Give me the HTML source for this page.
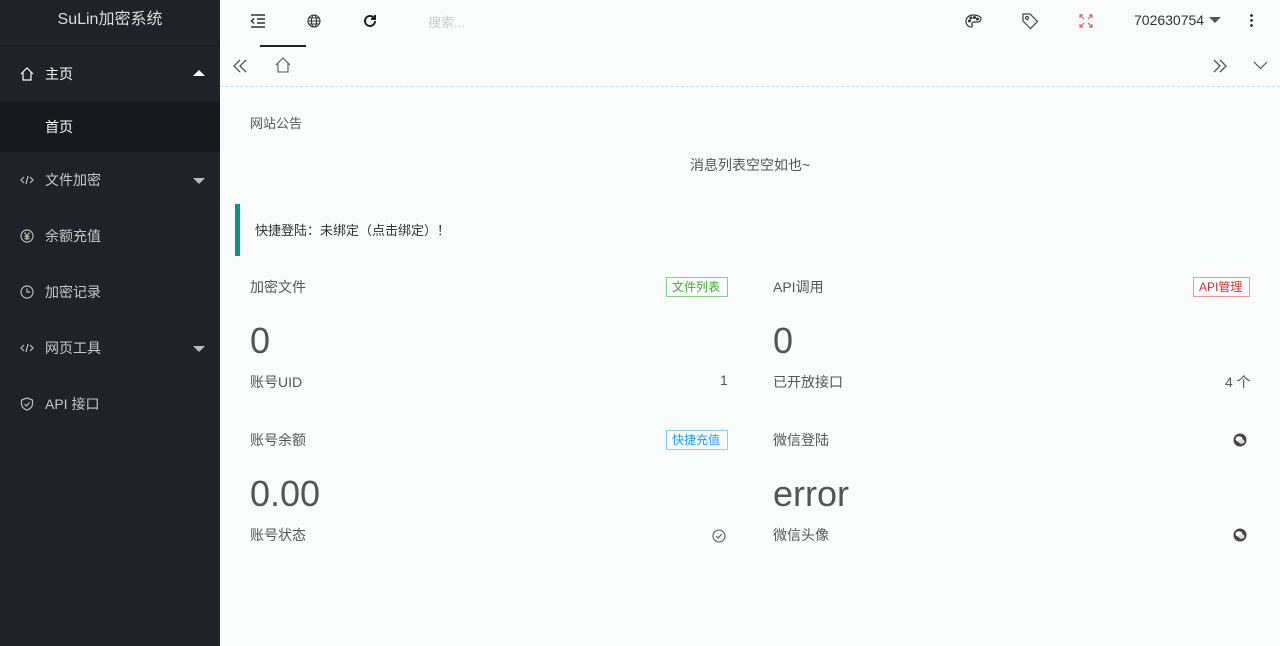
<!DOCTYPE html>
<html><head><meta charset="utf-8"><style>
*{margin:0;padding:0;box-sizing:border-box}
body{width:1280px;height:646px;overflow:hidden;background:#fafbfb;font-family:"Liberation Sans","Noto Sans CJK SC",sans-serif;font-size:14px;color:#333;position:relative}
.side{position:absolute;left:0;top:0;width:220px;height:646px;background:#20222a;color:rgba(255,255,255,.75)}
.logo{height:46px;line-height:40px;text-align:center;font-size:16px;color:#ddd;border-bottom:1px solid #1b1c22}
.it{height:56px;display:flex;align-items:center;padding-left:20px;position:relative;font-size:14px}
.it svg{width:14px;height:14px;margin-right:11px}
.sub{height:50px;line-height:50px;padding-left:45px;background:#18191e;color:#fff}
.arr{position:absolute;right:15px;top:26px;width:0;height:0;border-left:6px solid transparent;border-right:6px solid transparent;border-top:6px solid #bbb}
.up{border-top:none;border-bottom:6px solid #fff;top:24px}
.abs{position:absolute}
.lbl{font-size:14px;color:#555}
.big{font-size:36px;color:#555}
.tag{position:absolute;font-size:12px;height:20px;line-height:18px;padding:0 5px;border:1px solid}
</style></head><body>
<div class="side">
<div class="logo">SuLin加密系统</div>
<div class="it" style="color:#fff"><svg viewBox="0 0 14 14" fill="none" stroke="#fff" stroke-width="1.2"><path d="M1 7L7 1l6 6M3 5.5V13h8V5.5"/></svg>主页<span class="arr up"></span></div>
<div class="sub">首页</div>
<div class="it"><svg viewBox="0 0 14 14" fill="none" stroke="#bbb" stroke-width="1.2"><path d="M4 4L1 7l3 3M10 4l3 3-3 3M8 3L6 11"/></svg>文件加密<span class="arr"></span></div>
<div class="it"><svg viewBox="0 0 14 14" fill="none" stroke="#bbb" stroke-width="1.2"><circle cx="7" cy="7" r="6"/><path d="M4.5 3.5L7 7l2.5-3.5M7 7v4M4.5 7.5h5M4.5 9.5h5"/></svg>余额充值</div>
<div class="it"><svg viewBox="0 0 14 14" fill="none" stroke="#bbb" stroke-width="1.2"><circle cx="7" cy="7" r="6"/><path d="M7 3.5V7h3"/></svg>加密记录</div>
<div class="it"><svg viewBox="0 0 14 14" fill="none" stroke="#bbb" stroke-width="1.2"><path d="M4 4L1 7l3 3M10 4l3 3-3 3M8 3L6 11"/></svg>网页工具<span class="arr"></span></div>
<div class="it"><svg viewBox="0 0 14 14" fill="none" stroke="#bbb" stroke-width="1.2"><path d="M7 1l5.5 2v4c0 3-2.5 5-5.5 6C4 12 1.5 10 1.5 7V3z"/><path d="M4.5 7l2 2 3-3.5"/></svg>API 接口</div>
</div>

<svg class="abs" style="left:250px;top:13px" width="16" height="16" viewBox="0 0 16 16" fill="none" stroke="#333" stroke-width="1.5"><path d="M1 2h14M7 6h8M7 10h8M1 14h14M4 5.5L1.5 8 4 10.5"/></svg>
<div class="abs" style="left:260px;top:45px;width:46px;height:2px;background:#222"></div>
<svg class="abs" style="left:307px;top:14px" width="14" height="14" viewBox="0 0 14 14" fill="none" stroke="#333" stroke-width="1.1"><circle cx="7" cy="7" r="6"/><ellipse cx="7" cy="7" rx="2.6" ry="6"/><path d="M1 7h12M2 4h10M2 10h10"/></svg>
<svg class="abs" style="left:362px;top:13px" width="16" height="16" viewBox="0 0 16 16" fill="none" stroke="#222" stroke-width="2"><path d="M13 8a5 5 0 1 1-1.5-3.6"/><path d="M13 2v4H9" fill="#222"/></svg>
<div class="abs" style="left:428px;top:12px;color:#ccc;font-size:13px">搜索...</div>
<svg class="abs" style="left:965px;top:13px" width="17" height="16" viewBox="0 0 17 16" fill="none" stroke="#333" stroke-width="1.2"><path d="M8 2C4 2 1 5 1 8.5S4 14 6 14c1.5 0 1.5-1.5 1-2.5S7.5 9 9 9h3c2.5 0 4-1.5 4-3.5C16 3.5 12.5 2 8 2z"/><circle cx="4.5" cy="8" r=".9" fill="#333"/><circle cx="6" cy="5" r=".9" fill="#333"/><circle cx="9.5" cy="4.5" r=".9" fill="#333"/><circle cx="12.5" cy="6" r=".9" fill="#333"/></svg>
<svg class="abs" style="left:1021px;top:12px" width="18" height="18" viewBox="0 0 18 18" fill="none" stroke="#444" stroke-width="1.2"><path d="M2 2h7l7.5 7.5-7 7L2 9z"/><circle cx="6" cy="6" r="1.5"/></svg>
<svg class="abs" style="left:1079px;top:14px" width="14" height="14" viewBox="0 0 14 14" fill="none" stroke="#c66" stroke-width="1.2"><path d="M1 4V1h3M10 1h3v3M13 10v3h-3M4 13H1v-3M1 1l4 4M13 1L9 5M13 13L9 9M1 13l4-4"/></svg>
<div class="abs" style="left:1134px;top:12px;font-size:14px;color:#333">702630754</div>
<div class="abs" style="left:1209px;top:17px;border-left:6px solid transparent;border-right:6px solid transparent;border-top:6px solid #555"></div>
<div class="abs" style="left:1250px;top:13px;width:3px;height:15px;background:radial-gradient(circle,#333 1.3px,transparent 1.5px) 0 0/3px 5px"></div>

<svg class="abs" style="left:232px;top:59px" width="16" height="14" viewBox="0 0 16 14" fill="none" stroke="#555" stroke-width="1.3"><path d="M8 1L2 7l6 6M14 1L8 7l6 6"/></svg>
<svg class="abs" style="left:275px;top:57px" width="16" height="16" viewBox="0 0 16 16" fill="none" stroke="#555" stroke-width="1.1"><path d="M1 8l7-7 7 7M3 6.5V15h10V6.5"/></svg>
<svg class="abs" style="left:1212px;top:59px" width="16" height="14" viewBox="0 0 16 14" fill="none" stroke="#555" stroke-width="1.3"><path d="M2 1l6 6-6 6M8 1l6 6-6 6"/></svg>
<svg class="abs" style="left:1253px;top:61px" width="15" height="9" viewBox="0 0 15 9" fill="none" stroke="#555" stroke-width="1.2"><path d="M1 1l6.5 6.5L14 1"/></svg>
<div class="abs" style="left:220px;top:86px;width:1060px;border-top:1px dashed #cde"></div>

<div class="abs lbl" style="left:250px;top:113px;font-size:13px">网站公告</div>
<div class="abs lbl" style="left:690px;top:155px">消息列表空空如也~</div>
<div class="abs" style="left:235px;top:204px;width:5px;height:52px;background:#009688"></div>
<div class="abs" style="left:255px;top:220px;font-size:13px;color:#333">快捷登陆：未绑定（点击绑定）！</div>

<div class="abs lbl" style="left:250px;top:277px">加密文件</div>
<div class="tag" style="left:666px;top:277px;width:62px;border-color:#8c8;color:#4a3">文件列表</div>
<div class="abs big" style="left:250px;top:320px">0</div>
<div class="abs lbl" style="left:250px;top:372px">账号UID</div>
<div class="abs lbl" style="left:720px;top:372px">1</div>

<div class="abs lbl" style="left:773px;top:277px">API调用</div>
<div class="tag" style="left:1193px;top:277px;width:57px;color:#c33;border-color:#e99">API管理</div>
<div class="abs big" style="left:773px;top:320px">0</div>
<div class="abs lbl" style="left:773px;top:372px">已开放接口</div>
<div class="abs lbl" style="left:1225px;top:372px">4 个</div>

<div class="abs lbl" style="left:250px;top:430px">账号余额</div>
<div class="tag" style="left:666px;top:430px;width:62px;color:#1e9fff;border-color:#8cf">快捷充值</div>
<div class="abs big" style="left:250px;top:473px">0.00</div>
<div class="abs lbl" style="left:250px;top:525px">账号状态</div>
<svg class="abs" style="left:712px;top:529px" width="14" height="14" viewBox="0 0 14 14" fill="none" stroke="#555" stroke-width="1.1"><circle cx="7" cy="7" r="6"/><path d="M4 7l2 2 4-4"/></svg>

<div class="abs lbl" style="left:773px;top:430px">微信登陆</div>
<svg class="abs" style="left:1233px;top:433px" width="14" height="14" viewBox="0 0 14 14"><circle cx="7" cy="7" r="6.5" fill="#444"/><ellipse cx="6" cy="6" rx="3.5" ry="2.8" fill="#fff"/><ellipse cx="8.5" cy="8.5" rx="3" ry="2.3" fill="#ddd"/></svg>
<div class="abs big" style="left:773px;top:473px">error</div>
<div class="abs lbl" style="left:773px;top:525px">微信头像</div>
<svg class="abs" style="left:1233px;top:528px" width="14" height="14" viewBox="0 0 14 14"><circle cx="7" cy="7" r="6.5" fill="#444"/><ellipse cx="6" cy="6" rx="3.5" ry="2.8" fill="#fff"/><ellipse cx="8.5" cy="8.5" rx="3" ry="2.3" fill="#ddd"/></svg>
</body></html>
